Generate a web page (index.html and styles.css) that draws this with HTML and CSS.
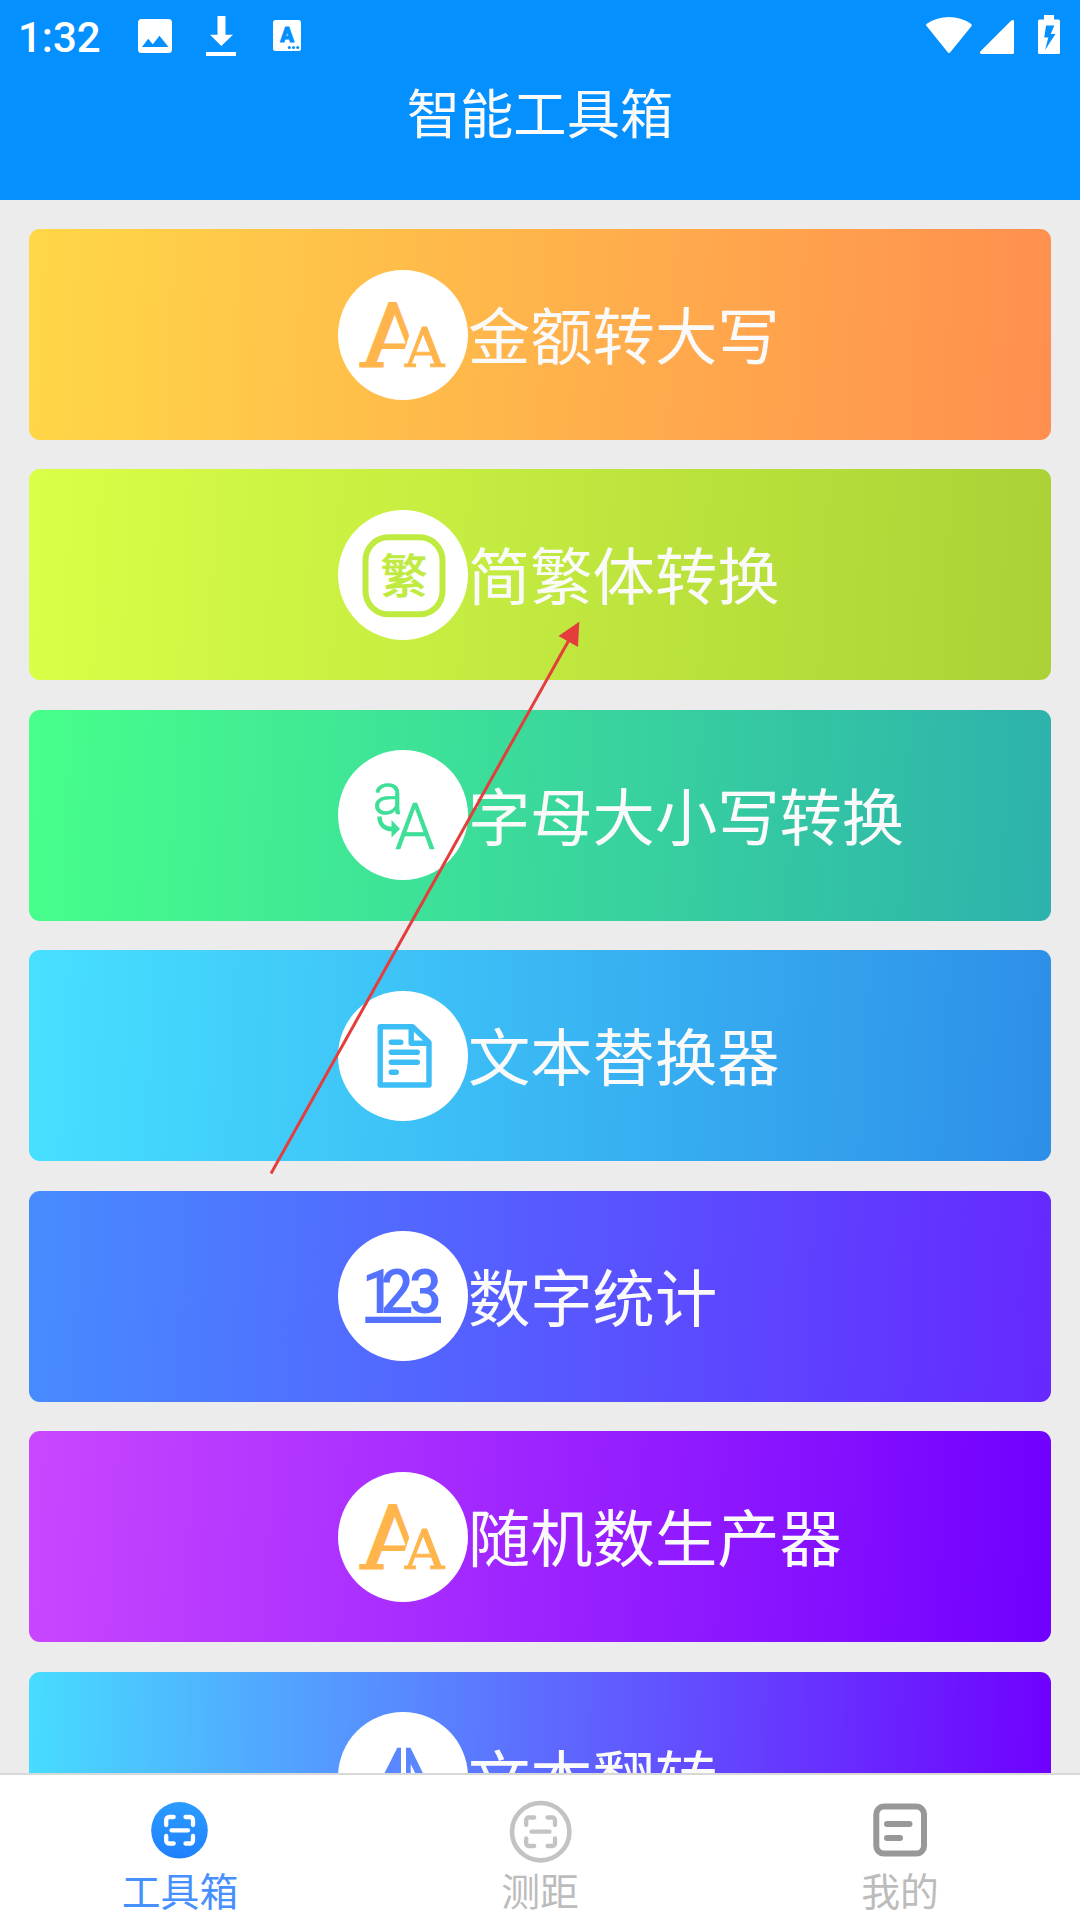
FILE: index.html
```html
<!DOCTYPE html>
<html lang="zh-CN">
<head>
    <meta charset="UTF-8">
    <meta name="viewport" content="width=device-width, initial-scale=1.0">
    <title>智能工具箱</title>
    <link rel="stylesheet" href="styles.css">
</head>
<body>

<header class="header">
    <div class="status-bar">
        <span class="time">1:32</span>
        <svg class="icon-image" width="34" height="34" viewBox="0 0 34 34">
            <path fill="#fff" fill-rule="evenodd" d="M3.5 0h27A3.5 3.5 0 0 1 34 3.500v27a3.500 3.500 0 0 1-3.500 3.500h-27A3.500 3.500 0 0 1 0 30.500v-27A3.500 3.500 0 0 1 3.500 0zM4 28h26.500L21.500 16.800l-6.700 8.500-4.600-5.600z"/>
        </svg>
        <svg class="icon-download" width="30" height="40" viewBox="0 0 30 40">
            <path fill="#fff" d="M11.500 0h8v18.700h7.500L15.300 30 4 18.700h7.500zM0 36h30v4H0z"/>
        </svg>
        <svg class="icon-input" width="28" height="31" viewBox="0 0 28 31">
            <rect width="28" height="31" rx="2.500" fill="#fff"/>
            <text class="input-letter" x="14" y="22" text-anchor="middle">A</text>
            <circle cx="16.300" cy="27.500" r="1.500"/><circle cx="20.500" cy="27.500" r="1.500"/><circle cx="24.700" cy="27.500" r="1.500"/>
        </svg>
        <div class="status-right">
            <svg width="46" height="36" viewBox="0 0 46 36">
                <path fill="#fff" d="M.8 9.300C-.2 8.500-.2 7.500.8 6.700 14-2.200 32-2.200 45 6.700c1 .8 1 1.800.2 2.700L24.500 35c-.9 1.200-2.100 1.200-3 0z"/>
            </svg>
            <svg class="icon-signal" width="34" height="34" viewBox="0 0 34 34">
                <path fill="#fff" d="M34 1.500v31a1.500 1.500 0 0 1-1.500 1.500h-31C0 34-.4 32.300.5 31.300L31.300.6C32.300-.4 34 0 34 1.500z"/>
            </svg>
            <svg class="icon-battery" width="22" height="39" viewBox="0 0 22 39">
                <path fill="#fff" fill-rule="evenodd" d="M6 0h10v4.500h4.500A1.500 1.500 0 0 1 22 6v31.500a1.500 1.500 0 0 1-1.500 1.500h-19A1.500 1.500 0 0 1 0 37.500V6a1.500 1.500 0 0 1 1.500-1.500H6zM8 10.500L6.300 22.500h4L7 35l10.500-16h-4.800L16.300 10.500z"/>
            </svg>
        </div>
    </div>
    <h1 class="title">智能工具箱</h1>
</header>

<main class="tool-list">
    <div class="tool tool-money">
        <svg class="tool-icon" viewBox="0 0 130 130">
            <circle cx="65" cy="65" r="65" fill="#fff"/>
            <clipPath id="bigLetter"><path d="M0 0H66L71 66 60 100H0z"/></clipPath>
            <g clip-path="url(#bigLetter)">
                <text class="slab slab-big" transform="translate(54.500 96.700) scale(-1 1)" text-anchor="middle">A</text>
            </g>
            <text class="slab slab-small" x="86.500" y="96.700" text-anchor="middle">A</text>
        </svg>
        <span class="tool-name">金额转大写</span>
    </div>
    <div class="tool tool-hant">
        <svg class="tool-icon" viewBox="0 0 130 130">
            <circle cx="65" cy="65" r="65" fill="#fff"/>
            <rect x="27.500" y="27.300" width="77" height="77" rx="23" fill="none" stroke="#bfea40" stroke-width="6"/>
            <text class="hant" x="66" y="83" text-anchor="middle">繁</text>
        </svg>
        <span class="tool-name">简繁体转换</span>
    </div>
    <div class="tool tool-case">
        <svg class="tool-icon" viewBox="0 0 130 130">
            <circle cx="65" cy="65" r="65" fill="#fff"/>
            <text class="case" x="34.500" y="64" font-size="58">a</text>
            <text class="case" x="77" y="99" font-size="64" text-anchor="middle">A</text>
            <path d="M41.500 66.500c0 8 5 12.500 13 12.500" fill="none" stroke="#3fdf98" stroke-width="4.500"/>
            <path d="M53.500 70L62 79l-8.500 8.500z" fill="#3fdf98"/>
        </svg>
        <span class="tool-name">字母大小写转换</span>
    </div>
    <div class="tool tool-replace">
        <svg class="tool-icon" viewBox="0 0 130 130">
            <circle cx="65" cy="65" r="65" fill="#fff"/>
            <g fill="none" stroke="#3cbdf5" stroke-width="5.400" stroke-linejoin="round">
                <path d="M42.200 35.700H74.500L91 51.500V94H42.200z"/>
                <path d="M73.200 36v16.300H91"/>
                <path d="M53.300 51.300h9.500M53.300 61.300h26M53.300 71.300h26M53.300 81.300h5" stroke-linecap="round"/>
            </g>
        </svg>
        <span class="tool-name">文本替换器</span>
    </div>
    <div class="tool tool-count">
        <svg class="tool-icon" viewBox="0 0 130 130">
            <circle cx="65" cy="65" r="65" fill="#fff"/>
            <text class="digits" transform="translate(24 82) scale(.94 1)" x="0 20 50" y="0">123</text>
            <rect x="27.300" y="85.700" width="75.700" height="6.300" fill="#5571ff"/>
        </svg>
        <span class="tool-name">数字统计</span>
    </div>
    <div class="tool tool-random">
        <svg class="tool-icon" viewBox="0 0 130 130">
            <circle cx="65" cy="65" r="65" fill="#fff"/>
            <g clip-path="url(#bigLetter)">
                <text class="slab slab-big" transform="translate(54.500 96.700) scale(-1 1)" text-anchor="middle">A</text>
            </g>
            <text class="slab slab-small" x="86.500" y="96.700" text-anchor="middle">A</text>
        </svg>
        <span class="tool-name">随机数生产器</span>
    </div>
    <div class="tool tool-flip">
        <svg class="tool-icon" viewBox="0 0 130 130">
            <circle cx="65" cy="65" r="65" fill="#fff"/>
            <path d="M59.300 35.700H63V94H30z" fill="#5a86ff"/>
            <path fill="#5a86ff" fill-rule="evenodd" d="M68 35.700h4.500L101 94H68zM72.700 52v37H91z"/>
        </svg>
        <span class="tool-name">文本翻转</span>
    </div>
</main>

<nav class="tab-bar">
    <div class="tab active">
        <svg class="tab-icon" viewBox="0 0 64 64">
            <defs>
                <linearGradient id="tabBlue" x1="0" y1="0" x2="0" y2="1">
                    <stop offset="0" stop-color="#2b9cff"/>
                    <stop offset="1" stop-color="#1f80ff"/>
                </linearGradient>
            </defs>
            <circle cx="31.500" cy="31.300" r="28.300" fill="url(#tabBlue)"/>
            <path d="M18.200 26v-5a3 3 0 0 1 3-3h4.500M37.500 18H42a3 3 0 0 1 3 3v5M45 37v4.500a3 3 0 0 1-3 3h-4.500M25.700 44.500h-4.500a3 3 0 0 1-3-3V37M23.500 31.300h16.500" fill="none" stroke="#fff" stroke-width="4.300" stroke-linecap="round"/>
        </svg>
        <span>工具箱</span>
    </div>
    <div class="tab">
        <svg class="tab-icon" viewBox="0 0 64 64">
            <g fill="none" stroke="#c3c3c3" stroke-width="4.300">
                <circle cx="32.700" cy="32.700" r="28.700" stroke-width="4.600"/>
                <path d="M18.200 26v-5a2.500 2.500 0 0 1 2.500-2.500h5.500M39.500 18.500h5a2.500 2.500 0 0 1 2.500 2.500v5M47 39.500v5a2.500 2.500 0 0 1-2.500 2.500h-5M26.200 47h-5.500a2.500 2.500 0 0 1-2.500-2.500v-5" stroke-linecap="round"/>
                <path d="M23.500 32.700h18" stroke-linecap="round"/>
            </g>
        </svg>
        <span>测距</span>
    </div>
    <div class="tab">
        <svg class="tab-icon" viewBox="0 0 64 64">
            <g fill="none" stroke="#989898" stroke-width="6" stroke-linecap="round">
                <rect x="8.300" y="7.600" width="47.700" height="47" rx="7.500"/>
                <path d="M19 25h22.500M19 39h13"/>
            </g>
        </svg>
        <span>我的</span>
    </div>
</nav>

<!-- pointer drawn over the cards -->
<svg class="pointer" width="312" height="556" viewBox="0 0 312 556">
    <path d="M1 553.500L299 20" stroke="#e53c3c" stroke-width="3"/>
    <path d="M309.300 1.700L288.500 16l19.500 11z" fill="#e53c3c"/>
</svg>

</body>
</html>
```

FILE: styles.css
```css
* {
    box-sizing: border-box;
}
body {
    position: relative;
    display: flex;
    flex-direction: column;
    width: 1080px;
    height: 1920px;
    margin: 0;
    overflow: hidden;
    background: #ececec;
    font-family: "Noto Sans CJK SC", sans-serif;
}
svg {
    display: block;
    flex: none;
}
.header {
    height: 200px;
    background: #0590ff;
    color: #fafafa;
}
.status-bar {
    display: flex;
    align-items: flex-start;
    height: 71px;
    padding: 15px 20px 0 18px;
}
.time {
    width: 120px;
    margin-top: -1px;
    font: 500 42px/48px Roboto, sans-serif;
    color: #fff;
}
.icon-image {
    margin-top: 4px;
}
.icon-download {
    margin: 1px 0 0 34px;
}
.icon-input {
    margin: 5px 0 0 37px;
    fill: #0590ff;
}
.input-letter {
    font: 900 20px Roboto, sans-serif;
    stroke: #0590ff;
    stroke-width: 1px;
}
.status-right {
    display: flex;
    margin-left: auto;
    padding-top: 2px;
}
.icon-signal {
    margin: 3px 0 0 8px;
}
.icon-battery {
    margin: -2px 0 0 24px;
}
.title {
    margin: 0;
    text-align: center;
    font-size: 53.3px;
    font-weight: 400;
    line-height: 80px;
}
.tool-list {
    display: flex;
    flex: 1;
    flex-direction: column;
    gap: 29.4px;
    min-height: 0;
    padding: 29px 29px 0;
    overflow: hidden;
}
.tool {
    display: flex;
    flex: none;
    align-items: center;
    height: 211.05px;
    padding-left: 309px;
    border-radius: 11px;
    color: #fafafa;
}
.tool-icon {
    width: 130px;
    height: 130px;
}
.tool-name {
    padding-bottom: 3px;
    font-size: 62.3px;
    line-height: 90px;
    white-space: nowrap;
}
.tool-money {
    background: linear-gradient(93deg, #ffd747, #ff8f4f);
}
.tool-hant {
    background: linear-gradient(93deg, #d9ff47, #aad236);
}
.tool-case {
    background: linear-gradient(93deg, #47ff8b, #2db2ac);
}
.tool-replace {
    background: linear-gradient(93deg, #47e0ff, #2d8fe8);
}
.tool-count {
    background: linear-gradient(93deg, #478cff, #6628ff);
}
.tool-random {
    background: linear-gradient(93deg, #c947ff, #7000ff);
}
.tool-flip {
    background: linear-gradient(91deg, #47dcff, #5a7dff 42%, #7000ff);
}

/* lettering inside the round icons */
.slab {
    font-family: "DejaVu Serif", serif;
    fill: #ffb54c;
    stroke: #ffb54c;
    stroke-linejoin: round;
}
.slab-big {
    font-size: 88px;
    stroke-width: 1px;
}
.slab-small {
    font-size: 55px;
    stroke-width: .8px;
}
.hant {
    font-size: 47px;
    font-weight: 500;
    fill: #bfea40;
    stroke: #bfea40;
    stroke-width: .4px;
}
.case {
    font-family: Roboto, sans-serif;
    font-weight: 300;
    fill: #3fdf98;
    stroke: #3fdf98;
    stroke-width: .7px;
}
.digits {
    font: 500 61px Roboto, sans-serif;
    fill: #5571ff;
}

.tab-bar {
    display: flex;
    height: 147px;
    border-top: 2px solid #d8d8d8;
    background: #fff;
}
.tab {
    display: flex;
    flex: 1;
    flex-direction: column;
    align-items: center;
    padding-top: 24px;
    color: #bcbcbc;
    font-size: 38.8px;
    line-height: 52px;
}
.tab.active {
    color: #4690ff;
}
.tab-icon {
    width: 64px;
    height: 64px;
}
.pointer {
    position: absolute;
    left: 270px;
    top: 620px;
}
```
